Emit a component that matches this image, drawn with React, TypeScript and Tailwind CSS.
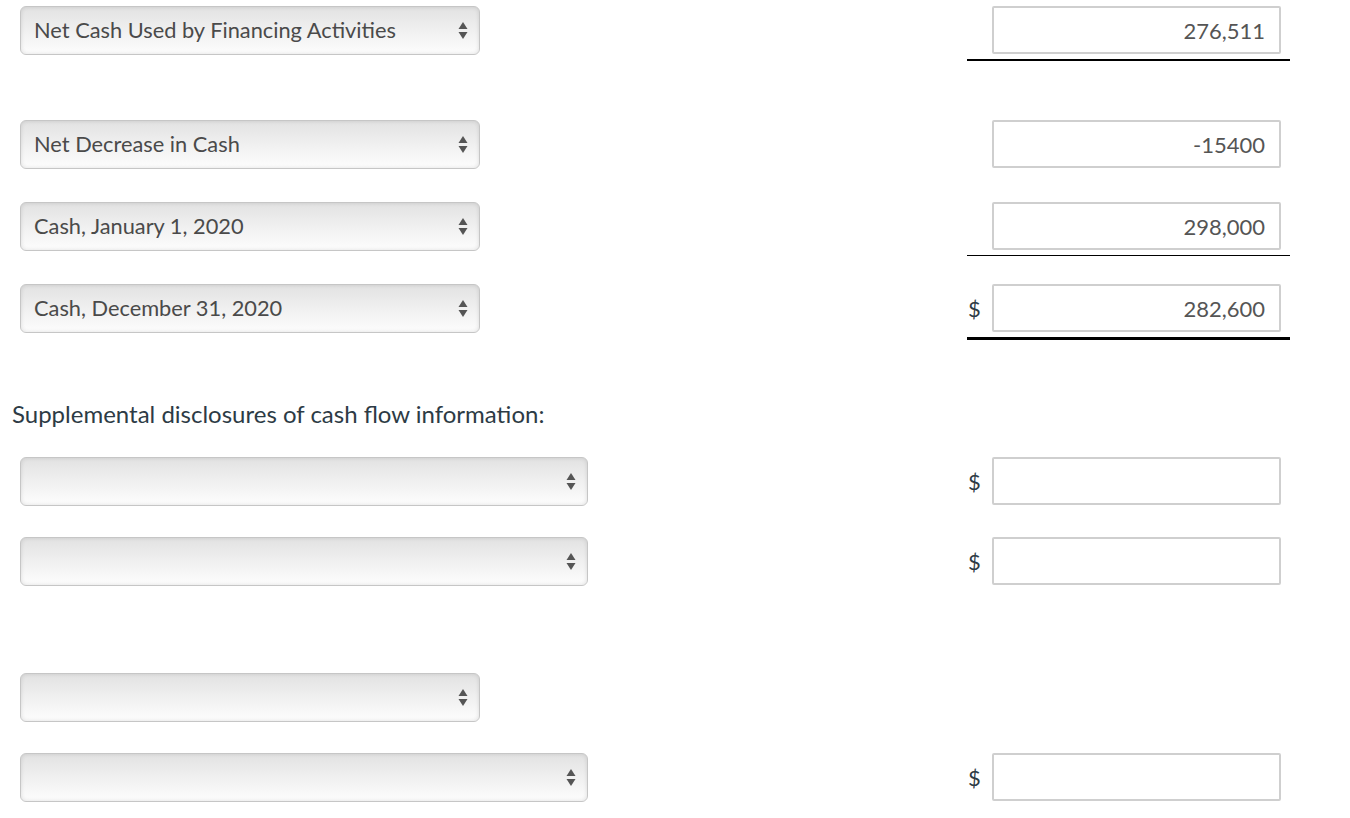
import React from 'react';

type Line = 'none' | 'thin' | 'single' | 'double';

interface RowProps {
  label?: string;
  value?: string;
  dollar?: boolean;
  wide?: boolean;
  line?: Line;
  input?: boolean;
  className?: string;
}

const SelectBox: React.FC<{ label?: string; wide?: boolean }> = ({ label, wide }) => (
  <div
    className={`
      flex items-center justify-between h-[49px] pl-[13px] pr-[11px]
      rounded-[6px] border border-[#c6c6c6]
      bg-linear-to-b from-[#e2e2e2] via-[#f0f0f0] to-[#fdfdfd]
      shadow-[inset_0_0_4px_rgba(0,0,0,0.12)]
      ${wide ? 'w-[568px]' : 'w-[460px]'}
    `}
  >
    <span className="text-[21.8px] text-[#4a4a4a] font-normal">{label}</span>
    <svg width="10" height="19" viewBox="0 0 10 19" className="flex-shrink-0">
      <polygon points="5,1 9.5,8 0.5,8" fill="#555" />
      <polygon points="0.5,11 9.5,11 5,18" fill="#555" />
    </svg>
  </div>
);

const Row: React.FC<RowProps> = ({ label, value, dollar, wide, line = 'none', input = true, className }) => (
  <div className={`flex items-start ${className ?? ''}`}>
    <div className="w-[967px] pl-[20px]">
      <SelectBox label={label} wide={wide} />
    </div>
    {input && (
      <div className="w-[323px] flex flex-col">
        <div className="flex items-center h-[48px]">
          <span className="w-[25px] text-[22px] text-[#2d3b45] pl-[1px]">{dollar ? '$' : ''}</span>
          <div className="w-[289px] h-[48px] border-2 border-[#cfcfcf] rounded-[2px] flex items-center justify-end pr-[14px] text-[22px] text-[#555]">
            {value}
          </div>
        </div>
        {line === 'single' && <div className="mt-[5px] h-[2px] bg-black" />}
        {line === 'thin' && <div className="mt-[5px] h-[1px] bg-black" />}
        {line === 'double' && <div className="mt-[5px] h-[3px] bg-black" />}
      </div>
    )}
  </div>
);

export default function App() {
  return (
    <div className="w-[1350px] min-h-[818px] bg-white pt-[6px]" style={{ fontFamily: 'Lato, "Noto Sans", sans-serif' }}>
      <Row label="Net Cash Used by Financing Activities" value="276,511" line="single" />
      <Row label="Net Decrease in Cash" value="-15400" className="mt-[59px]" />
      <Row label="Cash, January 1, 2020" value="298,000" line="thin" className="mt-[33px]" />
      <Row label="Cash, December 31, 2020" value="282,600" dollar line="double" className="mt-[28px]" />

      <div className="mt-[60px] pl-[12px] h-[28px] leading-[28px] text-[24px] text-[#2d3b45]">
        Supplemental disclosures of cash flow information:
      </div>

      <Row wide dollar className="mt-[29px]" />
      <Row wide dollar className="mt-[31px]" />
      <Row input={false} className="mt-[87px]" />
      <Row wide dollar className="mt-[31px]" />
    </div>
  );
}
